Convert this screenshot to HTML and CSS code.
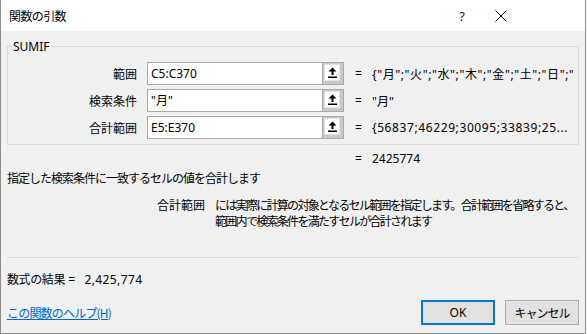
FILE: index.html
```html
<!DOCTYPE html>
<html lang="ja">
<head>
<meta charset="utf-8">
<title>関数の引数</title>
<link rel="stylesheet" href="styles.css">
</head>
<body>
<div class="window">
  <div class="titlebar">
    <div class="title jp">関数の引数</div>
    <div class="tb-btn help">?</div>
    <div class="tb-btn close">
      <svg width="12" height="12" viewBox="0 0 12 12"><path d="M0.5 0.5 L11.5 11.5 M11.5 0.5 L0.5 11.5" stroke="#000" stroke-width="1" fill="none"/></svg>
    </div>
  </div>
  <div class="main">
    <div class="group">
      <div class="legend">SUMIF</div>
      <div class="rows">
        <div class="row">
          <div class="label jp">範囲</div>
          <div class="field"><div class="input">C5:C370</div><div class="pick"><div class="pick-in"><svg width="9" height="11" viewBox="0 0 9 11"><path d="M4.5 0.5 L8.5 4.5 L5.5 4.5 L5.5 8 L3.5 8 L3.5 4.5 L0.5 4.5 Z" fill="#000"/><rect x="0" y="9.5" width="9" height="1.5" fill="#000"/></svg></div></div></div>
          <div class="eq">=</div>
          <div class="value wide">{"月";"火";"水";"木";"金";"土";"日";"</div>
        </div>
        <div class="row">
          <div class="label jp">検索条件</div>
          <div class="field"><div class="input">"月"</div><div class="pick"><div class="pick-in"><svg width="9" height="11" viewBox="0 0 9 11"><path d="M4.5 0.5 L8.5 4.5 L5.5 4.5 L5.5 8 L3.5 8 L3.5 4.5 L0.5 4.5 Z" fill="#000"/><rect x="0" y="9.5" width="9" height="1.5" fill="#000"/></svg></div></div></div>
          <div class="eq">=</div>
          <div class="value">"月"</div>
        </div>
        <div class="row">
          <div class="label jp">合計範囲</div>
          <div class="field"><div class="input">E5:E370</div><div class="pick"><div class="pick-in"><svg width="9" height="11" viewBox="0 0 9 11"><path d="M4.5 0.5 L8.5 4.5 L5.5 4.5 L5.5 8 L3.5 8 L3.5 4.5 L0.5 4.5 Z" fill="#000"/><rect x="0" y="9.5" width="9" height="1.5" fill="#000"/></svg></div></div></div>
          <div class="eq">=</div>
          <div class="value wide">{56837;46229;30095;33839;25...</div>
        </div>
      </div>
    </div>
    <div class="result-line"><span class="eq">=</span><span>2425774</span></div>
    <div class="desc jp">指定した検索条件に一致するセルの値を合計します</div>
    <div class="arg-help">
      <div class="arg-name jp">合計範囲</div>
      <div class="arg-text jp">には実際に計算の対象となるセル範囲を指定します。合計範囲を省略すると、<br>範囲内で検索条件を満たすセルが合計されます</div>
    </div>
    <div class="sep"></div>
    <div class="formula"><span class="jp fx">数式の結果</span> =&nbsp;&nbsp;&nbsp;<span class="num">2,425,774</span></div>
    <div class="footer">
      <a class="helplink jp" href="#">この関数のヘルプ(H)</a>
      <div class="buttons">
        <div class="btn ok">OK</div>
        <div class="btn jp cancel">キャンセル</div>
      </div>
    </div>
  </div>
</div>
</body>
</html>
```
FILE: styles.css
```css
* { box-sizing: border-box; }
html, body { margin: 0; padding: 0; background: #ffffff; }
body {
  font-family: "Noto Sans", "Noto Sans CJK JP", sans-serif;
  font-size: 12px;
  color: #000;
}
.jp {
  font-family: "Noto Sans CJK JP", "Noto Sans", sans-serif;
}
.window {
  width: 586px;
  height: 334px;
  background: #f0f0f0;
  border-left: 1px solid #8c8c8c;
  border-right: 1px solid #8c8c8c;
  border-bottom: 1px solid #8c8c8c;
  display: flex;
  flex-direction: column;
  overflow: hidden;
}
.titlebar {
  height: 31px;
  flex-shrink: 0;
  background: #ffffff;
  display: flex;
  align-items: center;
  line-height: 16px;
}
.title { flex: 1; padding-left: 8px; letter-spacing: -0.6px; }
.tb-btn { display: flex; justify-content: center; align-items: center; height: 31px; }
.help { width: 40px; font-size: 13px; color: #222; }
.close { width: 38px; margin-right: 65px; }
.main {
  flex: 1;
  padding: 0 6px 0 6px;
  display: flex;
  flex-direction: column;
}
.group {
  margin-top: 15px;
  border: 1px solid #dcdcdc;
  padding: 0 0 5px 0;
}
.legend {
  width: fit-content;
  margin: -8px 0 0 4px;
  padding: 0 1px;
  line-height: 16px;
  background: #f0f0f0;
}
.rows {
  margin-top: 7px;
  display: flex;
  flex-direction: column;
  gap: 4px;
}
.row {
  display: flex;
  align-items: center;
  height: 23px;
}
.label {
  width: 129px;
  flex-shrink: 0;
  text-align: right;
  margin-right: 10px;
}
.field {
  width: 197px;
  flex-shrink: 0;
  height: 23px;
  display: flex;
  border: 1px solid #a9a9a9;
  background: #ffffff;
}
.input {
  flex: 1;
  padding-left: 3px;
  line-height: 21px;
  white-space: nowrap;
}
.pick {
  width: 21px;
  border-left: 1px solid #a9a9a9;
  background: #c8c8c8;
  padding: 1px 3px 3px 1px;
  display: flex;
}
.pick-in {
  flex: 1;
  background: #ffffff;
  border: 1px solid #e3e3e3;
  display: flex;
  align-items: center;
  justify-content: center;
}
.eq { width: 17px; margin-left: 11px; flex-shrink: 0; }
.value {
  width: 201px;
  white-space: nowrap;
  overflow: hidden;
}
.value.wide { letter-spacing: 0.6px; }
.result-line {
  margin-top: 6px;
  padding-left: 337px;
  line-height: 16px;
  display: flex;
}
.desc {
  margin-top: 3px;
  line-height: 16px;
  letter-spacing: -1px;
}
.arg-help {
  margin-top: 11px;
  display: flex;
  line-height: 16px;
  padding-left: 150px;
}
.arg-name { width: 48px; flex-shrink: 0; margin-right: 10px; white-space: nowrap; }
.arg-text { white-space: nowrap; letter-spacing: -1.7px; }
.sep {
  margin-top: 28px;
  height: 1px;
  flex-shrink: 0;
  background: #dcdcdc;
}
.formula {
  margin-top: 13px;
  line-height: 16px;
}
.fx { letter-spacing: -0.4px; }
.num { letter-spacing: 0.4px; }
.footer {
  margin-top: 12px;
  display: flex;
  align-items: center;
  justify-content: space-between;
}
.helplink {
  color: #0066cc;
  text-decoration: underline;
  line-height: 16px;
  letter-spacing: -0.8px;
}
.buttons { display: flex; gap: 10px; }
.btn {
  width: 74px;
  height: 25px;
  background: #e1e1e1;
  border: 1px solid #adadad;
  display: flex;
  align-items: center;
  justify-content: center;
}
.btn.cancel { letter-spacing: -1px; }
.btn.ok { border: 2px solid #0078d7; }
```
